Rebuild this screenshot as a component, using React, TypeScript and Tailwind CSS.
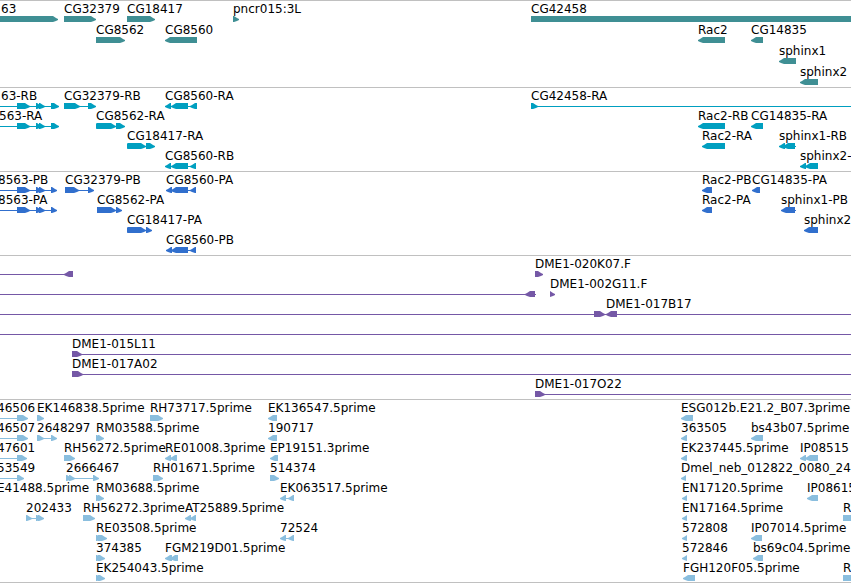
type Dir = ">" | "<" | "=";
type Exon = [start: number, end: number, dir: Dir];
type Label = [x: number, text: string];

interface Row {
  labels?: Label[];
  lines?: [number, number][];
  exons?: Exon[];
}

interface Track {
  name: string;
  color: string;
  rowClass: string;
  rows: Row[];
}

const END = 4000;

const tracks: Track[] = [
  {
    name: "Genes",
    color: "text-[#3f8f94]",
    rowClass: "h-[21px]",
    rows: [
      {
        labels: [[1, "63"], [64, "CG32379"], [127, "CG18417"], [233, "pncr015:3L"], [531, "CG42458"]],
        exons: [[-10, 58, ">"], [64, 96, ">"], [127, 155, ">"], [233, 239, ">"], [531, END, "="]],
      },
      {
        labels: [[96, "CG8562"], [165, "CG8560"], [698, "Rac2"], [751, "CG14835"]],
        exons: [[96, 125, ">"], [165, 197, "<"], [698, 725, "<"], [751, 763, "<"]],
      },
      { labels: [[779, "sphinx1"]], exons: [[779, 796, "<"]] },
      { labels: [[800, "sphinx2"]], exons: [[800, 818, "<"]] },
    ],
  },
  {
    name: "Transcripts",
    color: "text-[#009fc0]",
    rowClass: "h-5",
    rows: [
      {
        labels: [[1, "63-RB"], [64, "CG32379-RB"], [165, "CG8560-RA"], [531, "CG42458-RA"]],
        lines: [[-10, 58], [64, 96], [165, 197], [531, END]],
        exons: [[17, 30, ">"], [36, 42, ">"], [39, 45, ">"], [51, 59, ">"], [64, 80, ">"], [88, 96, ">"], [165, 171, "<"], [171, 188, "<"], [190, 197, "<"], [531, 538, ">"]],
      },
      {
        labels: [[-1, "563-RA"], [96, "CG8562-RA"], [698, "Rac2-RB"], [751, "CG14835-RA"]],
        lines: [[-10, 58], [96, 125]],
        exons: [[17, 30, ">"], [36, 42, ">"], [39, 45, ">"], [51, 59, ">"], [96, 101, ">"], [97, 116, ">"], [116, 125, ">"], [698, 725, "<"], [751, 763, "<"]],
      },
      {
        labels: [[127, "CG18417-RA"], [702, "Rac2-RA"], [779, "sphinx1-RB"]],
        lines: [[127, 155], [779, 796]],
        exons: [[127, 132, ">"], [128, 146, ">"], [146, 155, ">"], [702, 725, "<"], [779, 785, "<"], [783, 795, "<"]],
      },
      {
        labels: [[165, "CG8560-RB"], [800, "sphinx2-"]],
        lines: [[165, 196], [800, 818]],
        exons: [[165, 171, "<"], [171, 188, "<"], [190, 196, "<"], [800, 806, "<"], [805, 818, "<"]],
      },
    ],
  },
  {
    name: "Coding sequences",
    color: "text-[#316fcd]",
    rowClass: "h-5",
    rows: [
      {
        labels: [[-2, "8563-PB"], [65, "CG32379-PB"], [166, "CG8560-PA"], [702, "Rac2-PB"], [752, "CG14835-PA"]],
        lines: [[-10, 57], [65, 94], [166, 196]],
        exons: [[17, 30, ">"], [36, 42, ">"], [39, 45, ">"], [51, 57, ">"], [65, 79, ">"], [88, 94, ">"], [166, 172, "<"], [171, 188, "<"], [190, 196, "<"], [702, 712, "<"], [752, 760, "<"]],
      },
      {
        labels: [[-2, "8563-PA"], [97, "CG8562-PA"], [702, "Rac2-PA"], [781, "sphinx1-PB"]],
        lines: [[-10, 57], [97, 122], [781, 796]],
        exons: [[17, 30, ">"], [36, 42, ">"], [39, 45, ">"], [51, 57, ">"], [97, 116, ">"], [116, 122, ">"], [702, 712, "<"], [781, 795, "<"]],
      },
      {
        labels: [[127, "CG18417-PA"], [804, "sphinx2"]],
        lines: [[127, 152]],
        exons: [[127, 132, ">"], [128, 146, ">"], [146, 152, ">"], [804, 818, "<"]],
      },
      {
        labels: [[166, "CG8560-PB"]],
        lines: [[166, 196]],
        exons: [[166, 172, "<"], [171, 188, "<"], [190, 196, "<"]],
      },
    ],
  },
  {
    name: "BACs",
    color: "text-[#7558a6]",
    rowClass: "h-5",
    rows: [
      { labels: [[535, "DME1-020K07.F"]], lines: [[-10, 72]], exons: [[64, 73, "<"], [535, 543, ">"]] },
      { labels: [[550, "DME1-002G11.F"]], lines: [[-10, 536]], exons: [[525, 535, "<"], [550, 555, ">"]] },
      { labels: [[606, "DME1-017B17"]], lines: [[-10, END]], exons: [[594, 605, ">"], [606, 617, "<"]] },
      { lines: [[-10, END]] },
      { labels: [[72, "DME1-015L11"]], lines: [[72, END]], exons: [[72, 82, ">"]] },
      { labels: [[72, "DME1-017A02"]], lines: [[72, END]], exons: [[72, 83, ">"]] },
      { labels: [[535, "DME1-017O22"]], lines: [[535, END]], exons: [[535, 545, ">"]] },
    ],
  },
  {
    name: "ESTs",
    color: "text-[#8abede]",
    rowClass: "h-5",
    rows: [
      {
        labels: [[-3, "46506"], [37, "EK146838.5prime"], [150, "RH73717.5prime"], [268, "EK136547.5prime"], [681, "ESG012b.E21.2_B07.3prime"]],
        lines: [[-10, 26]],
        exons: [[17, 28, ">"], [37, 44, ">"], [150, 163, ">"], [268, 277, "<"], [681, 693, "<"]],
      },
      {
        labels: [[-3, "46507"], [37, "2648297"], [96, "RM03588.5prime"], [268, "190717"], [681, "363505"], [751, "bs43b07.5prime"]],
        lines: [[-10, 26], [37, 56]],
        exons: [[17, 28, ">"], [37, 44, ">"], [51, 57, ">"], [96, 102, ">"], [98, 104, ">"], [268, 277, "<"], [681, 687, "<"], [751, 763, "<"]],
      },
      {
        labels: [[-3, "47601"], [64, "RH56272.5prime"], [165, "RE01008.3prime"], [270, "EP19151.3prime"], [681, "EK237445.5prime"], [800, "IP08515"]],
        lines: [[-10, 26], [165, 177]],
        exons: [[17, 27, ">"], [64, 75, ">"], [165, 171, "<"], [170, 177, "<"], [270, 278, "<"], [681, 687, "<"], [800, 806, "<"], [805, 818, "<"]],
      },
      {
        labels: [[-3, "53549"], [66, "2666467"], [153, "RH01671.5prime"], [270, "514374"], [681, "Dmel_neb_012822_0080_24"]],
        lines: [[-10, 23], [66, 98]],
        exons: [[17, 24, ">"], [66, 72, ">"], [69, 75, ">"], [93, 99, ">"], [153, 163, ">"], [270, 279, ">"], [681, 686, "<"]],
      },
      {
        labels: [[-3, "E41488.5prime"], [96, "RM03688.5prime"], [280, "EK063517.5prime"], [682, "EN17120.5prime"], [807, "IP08615"]],
        lines: [[280, 294]],
        exons: [[96, 102, ">"], [98, 104, ">"], [280, 286, "<"], [288, 294, "<"], [682, 687, "<"], [807, 818, "<"]],
      },
      {
        labels: [[26, "202433"], [83, "RH56272.3prime"], [185, "AT25889.5prime"], [682, "EN17164.5prime"], [843, "R"]],
        lines: [[26, 43], [185, 196]],
        exons: [[26, 32, ">"], [36, 42, ">"], [38, 44, ">"], [83, 95, ">"], [185, 191, "<"], [190, 196, "<"], [682, 687, "<"], [843, 860, ">"]],
      },
      {
        labels: [[96, "RE03508.5prime"], [280, "72524"], [682, "572808"], [751, "IP07014.5prime"]],
        lines: [[280, 294]],
        exons: [[96, 102, ">"], [98, 107, ">"], [280, 286, "<"], [288, 294, "<"], [682, 687, "<"], [751, 762, "<"]],
      },
      {
        labels: [[96, "374385"], [165, "FGM219D01.5prime"], [682, "572846"], [753, "bs69c04.5prime"]],
        lines: [[165, 178]],
        exons: [[96, 102, ">"], [98, 105, ">"], [165, 172, "<"], [170, 178, "<"], [682, 687, "<"], [753, 763, "<"]],
      },
      {
        labels: [[96, "EK254043.5prime"], [683, "FGH120F05.5prime"], [843, "R"]],
        exons: [[96, 102, ">"], [98, 105, ">"], [683, 695, "<"], [843, 860, ">"]],
      },
    ],
  },
];

/* Outline of one exon: a block whose leading end narrows to a blunt tip. */
function exonPoints([a, b, dir]: Exon) {
  const tip = Math.min(5, b - a);
  if (dir === ">") {
    return `${a},0 ${b - tip},0 ${b - 2},2 ${b},3 ${b},4 ${b - 2},5 ${b - tip},6 ${a},6`;
  }
  if (dir === "<") {
    return `${b},0 ${a + tip},0 ${a + 2},2 ${a},3 ${a},4 ${a + 2},5 ${a + tip},6 ${b},6`;
  }
  return `${a},0 ${b},0 ${b},6 ${a},6`;
}

function FeatureRow({ row, className }: { row: Row; className: string }) {
  return (
    <div className={`relative pt-[15px] ${className}`}>
      {row.labels?.map(([x, text]) => (
        <span
          key={x}
          className="absolute top-0 whitespace-pre text-xs leading-4 text-black"
          style={{ left: x }}
        >
          {text}
        </span>
      ))}
      <svg className="block h-1.5 w-full fill-current" aria-hidden="true">
        {row.lines?.map(([a, b]) => (
          <rect key={a} x={a} y={3} width={b - a} height={1} />
        ))}
        {row.exons?.map((exon) => (
          <polygon key={exon[0]} points={exonPoints(exon)} />
        ))}
      </svg>
    </div>
  );
}

export default function App() {
  return (
    <main className="w-full overflow-hidden border-b border-[#c0c0c0] bg-white font-['DejaVu_Sans',sans-serif]">
      {tracks.map((track) => (
        <section
          key={track.name}
          aria-label={track.name}
          className={`border-t border-[#c0c0c0] pb-[3px] first:pb-0.5 last:pb-0.5 ${track.color}`}
        >
          {track.rows.map((row, i) => (
            <FeatureRow key={i} row={row} className={track.rowClass} />
          ))}
        </section>
      ))}
    </main>
  );
}
